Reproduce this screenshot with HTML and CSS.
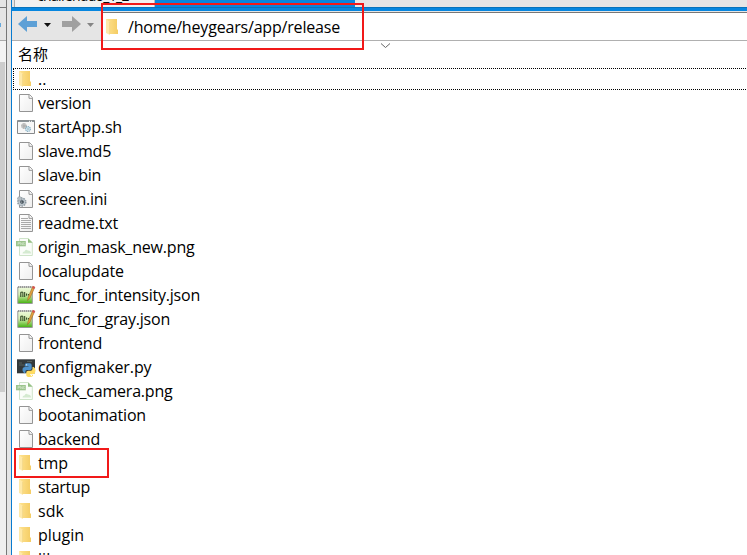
FILE: index.html
```
<!DOCTYPE html>
<html lang="zh">
<head>
<meta charset="utf-8">
<title>release</title>
<link rel="stylesheet" href="styles.css">
</head>
<body>
<svg class="defs" width="0" height="0">
<defs>
<linearGradient id="gold" x2="1"><stop stop-color="#ffe391"/><stop offset="1" stop-color="#f4cc63"/></linearGradient>
<linearGradient id="paper" x2="1" y2="1"><stop stop-color="#fff"/><stop offset="1" stop-color="#eee"/></linearGradient>
<linearGradient id="green" x2="0" y2="1"><stop stop-color="#eef9dd"/><stop offset=".45" stop-color="#d6f0b2"/><stop offset="1" stop-color="#43b00d"/></linearGradient>
<symbol id="folder" viewBox="0 0 18 18"><path d="M2 1h11v10l1 1v4H4z" fill="url(#gold)"/><path d="M2 1l4 3v13l-4-2z" fill="#ffe9a8"/><path d="M5.6 4v12" stroke="#edcd75" stroke-width=".6"/></symbol>
<symbol id="file" viewBox="0 0 18 18"><path d="M2.5 .5h10l3 3.2v13.8h-13z" fill="url(#paper)" stroke="#949494"/><path d="M12 .8v3.5h3.5" fill="#fff" stroke="#949494"/></symbol>
<symbol id="text" viewBox="0 0 18 18"><use href="#file"/><path d="M4 4.5h7M4 6.5h10M4 8.5h10M4 10.5h10M4 12.5h10M4 14.5h10" stroke="#a0a0a0" stroke-width=".9"/></symbol>
<symbol id="script" viewBox="0 0 18 18"><path d="M.5 2.5h17v13H.5z" fill="#f7f7f7" stroke="#87898b"/><path d="M1 3.3h16" stroke="#8b9398" stroke-width="1.4"/><path d="M12 3.3h4" stroke="#fff" stroke-dasharray="1 1"/><circle cx="7" cy="8" r="2.2" fill="#ddd" stroke="#8b8b8b" stroke-width="1.1" stroke-dasharray="1.1 .5"/><circle cx="11" cy="11" r="2.3" fill="#e6f3fa" stroke="#77a6bd" stroke-width="1.2" stroke-dasharray="1.1 .5"/><circle cx="7" cy="8" r=".8" fill="#777"/><circle cx="11" cy="11" r=".8" fill="#759eae"/></symbol>
<symbol id="ini" viewBox="0 0 18 18"><use href="#file"/><circle cx="4.8" cy="12" r="4" fill="#bbc5cc" stroke="#8e9aa2" stroke-width="1.5" stroke-dasharray="1.5 1"/><circle cx="2.6" cy="8.7" r="2.1" fill="#b5bec3" stroke="#89949b" stroke-dasharray="1 1"/><circle cx="5" cy="12" r="1.8" fill="#35434c"/><circle cx="4.8" cy="12" r=".6" fill="#fff"/></symbol>
<symbol id="png" viewBox="0 0 18 18"><path d="M2.5 .5h8.8l4 4v13H2.5z" fill="#fafdf9" stroke="#cfe4ca"/><path d="M11 .5v4.3h4.6z" fill="#93bf82"/><path d="M-1 3h9.8v5.3H-1z" fill="#9bc48c"/><path d="M1 7V4.3h1.5v1.3H1M3.6 7V4.3L5.4 7V4.3M7.7 4.5H6.4v2.2h1.3V5.7" fill="none" stroke="#d6ead0" stroke-width=".6"/><path d="M5.5 15.5q0-2 2-2 1-3 3.4-1 3 0 3.2 3z" fill="#d4ead0"/></symbol>
<symbol id="json" viewBox="0 0 18 18"><path d="M.8 1v16.5h14.5V1z" fill="url(#green)" stroke="#999"/><path d="M1 1h14" stroke="#8a8a8a" stroke-width="1.6" stroke-dasharray="1 1"/><path d="M3.8 11V6.2h2.1V11M7.7 6v5M9.6 7.5v2.2M11.4 8v1.5" fill="none" stroke="#263d1c" stroke-width="1"/><path d="M10.5 14.6l.6-3.2L15.8 .3l2 .9-4.8 10.9z" fill="#e3a13c" stroke="#9b6b2a" stroke-width=".6"/><path d="M15.9 0l2.2 .9-.9 2-2-.9z" fill="#d84e57"/></symbol>
<symbol id="python" viewBox="0 0 18 18"><path d="M0 1.3h18v14H0z" fill="#33393b"/><path d="M2 5h3M2 7h5M10 3.5h5" stroke="#56605d"/><path d="M9.3 5.2h3.4q2 0 2 2v3.3q0 1.5-2 1.5H10q-1.7 0-1.7 2v1H7Q5 14 5.5 10.7 6 9 8 9h3.5v-.6H7.7V7q0-1.6 1.6-1.8" fill="#4d91cc"/><path d="M15.5 9h1.2q1.8 1 1.8 3.6T16.7 16H13v.7h3v1Q15.5 19 12.5 19 9.3 19 9.3 17v-2.7q0-1.6 2-1.6h2.3q1.9 0 1.9-1.9z" fill="#ffdc62"/><circle cx="9.6" cy="6.8" r=".6" fill="#fff"/><circle cx="14.4" cy="17.4" r=".6" fill="#fff"/></symbol>
</defs>
</svg>
<div class="window">
  <aside class="neighbor"><div class="neighbor-top"></div><div class="neighbor-tools"><i></i></div><div class="neighbor-head"></div><div class="thumb"></div></aside>
  <div class="divider"></div>
  <main class="pane">
    <div class="tabs"><div class="tab inactive"><span>chaifenduo_1_2</span></div><div class="tab active"><span>自定义会话管理</span></div></div>
    <div class="accent"></div>
    <div class="toolbar">
      <svg class="nav" width="89" height="27" viewBox="0 0 89 27"><path d="M6 12l9-8v5h10v6H15v5z" fill="#5da0d6"/><path d="M32 11h7l-3.5 4z" fill="#111"/><path d="M69 12l-9-8v5H50v6h10v5z" fill="#a0a0a0"/><path d="M75 11h7l-3.5 4z" fill="#858585"/></svg>
      <div class="address"><svg class="icon"><use href="#folder"/></svg><span id="path">/home/heygears/app/release</span><div class="mark path-mark"></div></div>
    </div>
    <div class="heading"><span>名称</span><svg class="sort" width="11" height="6" viewBox="0 0 11 6"><path d="M1 .5l4.5 4L10 .5" fill="none" stroke="#666"/></svg></div>
    <div class="row parent"><svg class="icon"><use href="#folder"/></svg><span>..</span></div>
    <div id="files" class="files"></div>
  </main>
</div>
<script src="files.js"></script>
</body>
</html>
```
FILE: styles.css
```
*{box-sizing:border-box}
body{margin:0;width:747px;height:555px;overflow:hidden;background:#fff;color:#000;font:16px/24px "Open Sans","Noto Sans CJK SC",sans-serif}
.defs{position:absolute}
.window{display:flex;height:555px}
.neighbor{width:7px;background:#efefef;border-right:1px solid #777;display:flex;flex-direction:column}
.neighbor-top{height:8px;background:#e5e5e5;border-bottom:1px solid #777}
.neighbor-tools{height:33px;padding-top:15px;background:#e5e5e5;border-bottom:1px solid #aaa}
.neighbor-tools i{display:block;width:1px;height:4px;background:#67a9dc}
.neighbor-head{height:21px;background:#f3f3f3}
.thumb{height:330px;width:5px;background:#cdcdcd}
.divider{width:4px;background:#e5e5e5}
.pane{width:736px;display:flex;flex-direction:column;border-left:1px solid #087bd0}
.tabs{height:7px;background:#e5e5e5;display:flex;padding-left:2px;flex:none}
.tab{height:7px;overflow:hidden;display:flex}
.tab span{white-space:nowrap}
.inactive{width:141px;background:#f0f0f0;border-left:1px solid #aaa;border-right:1px solid #bbb;padding-left:22px;font-size:14px}
.inactive span{margin-top:-16px;letter-spacing:-.7px}
.active{width:200px;background:#0786df;color:#fff;padding-left:49px;font-size:14px}
.active span{margin-top:-20px}
.accent{height:4px;background:#0786df;border-top:1px solid #0873bb;flex:none}
.toolbar{height:30px;padding-top:1px;display:flex;background:#e5e5e5;border-bottom:1px solid #b0b0b0;flex:none}
.nav{flex:none;width:89px;height:27px}
.address{position:relative;flex:1;height:28px;background:#fff;border-top:1px solid #777;display:flex;align-items:center;padding-left:3px}
.icon{width:18px;height:18px;flex:none;overflow:visible}
.icon use,symbol{overflow:visible}
.address span{margin-left:6px;white-space:nowrap}
.mark{position:absolute;border:2px solid #f11919;pointer-events:none}
.path-mark{left:0;top:-10px;width:263px;height:47px}
.heading{height:27px;display:flex;padding:1px 0 0 6px;position:relative;flex:none}
.heading span{font-family:"Noto Sans CJK SC",sans-serif;font-size:15px}
.sort{position:absolute;left:368px;top:2px}
.row{height:24px;display:flex;align-items:center;padding-left:5px;position:relative;flex:none;white-space:nowrap}
.row span{margin-left:3px}
.parent{height:22px;margin-left:1px;padding-left:4px;background:repeating-linear-gradient(90deg,#000 0 1px,transparent 1px 2px) top/100% 1px no-repeat,repeating-linear-gradient(90deg,#000 0 1px,transparent 1px 2px) bottom/100% 1px no-repeat,repeating-linear-gradient(0deg,#000 0 1px,transparent 1px 2px) left/1px 100% no-repeat}
.files{display:flex;flex-direction:column;margin-top:1px}
.row-mark{left:2px;top:-3px;width:95px;height:30px;z-index:1}
```
FILE: files.js
```
const files = [
  ["file", "version", 53],
  ["script", "startApp.sh", 84],
  ["file", "slave.md5", 73],
  ["file", "slave.bin", 63],
  ["ini", "screen.ini", 69],
  ["text", "readme.txt", 80],
  ["png", "origin_mask_new.png", 156.5],
  ["file", "localupdate", 86],
  ["json", "func_for_intensity.json", 162],
  ["json", "func_for_gray.json", 132],
  ["file", "frontend", 64],
  ["python", "configmaker.py", 113.5],
  ["png", "check_camera.png", 134.5],
  ["file", "bootanimation", 108],
  ["file", "backend", 62],
  ["folder", "tmp", 30],
  ["folder", "startup", 52],
  ["folder", "sdk", 26],
  ["folder", "plugin", 46],
  ["folder", "lib", 18]
];

function fit(label, width) {
  const natural = label.getBoundingClientRect().width;
  label.style.letterSpacing = (width - natural) / label.textContent.length + "px";
}

const list = document.getElementById("files");
for (const [icon, name, width] of files) {
  const row = document.createElement("div");
  row.className = "row";
  row.innerHTML = `<svg class="icon"><use href="#${icon}"/></svg><span>${name}</span>`;
  if (name === "tmp") row.insertAdjacentHTML("beforeend", '<div class="mark row-mark"></div>');
  list.append(row);
  fit(row.querySelector("span"), width);
}
fit(document.getElementById("path"), 212);
```
